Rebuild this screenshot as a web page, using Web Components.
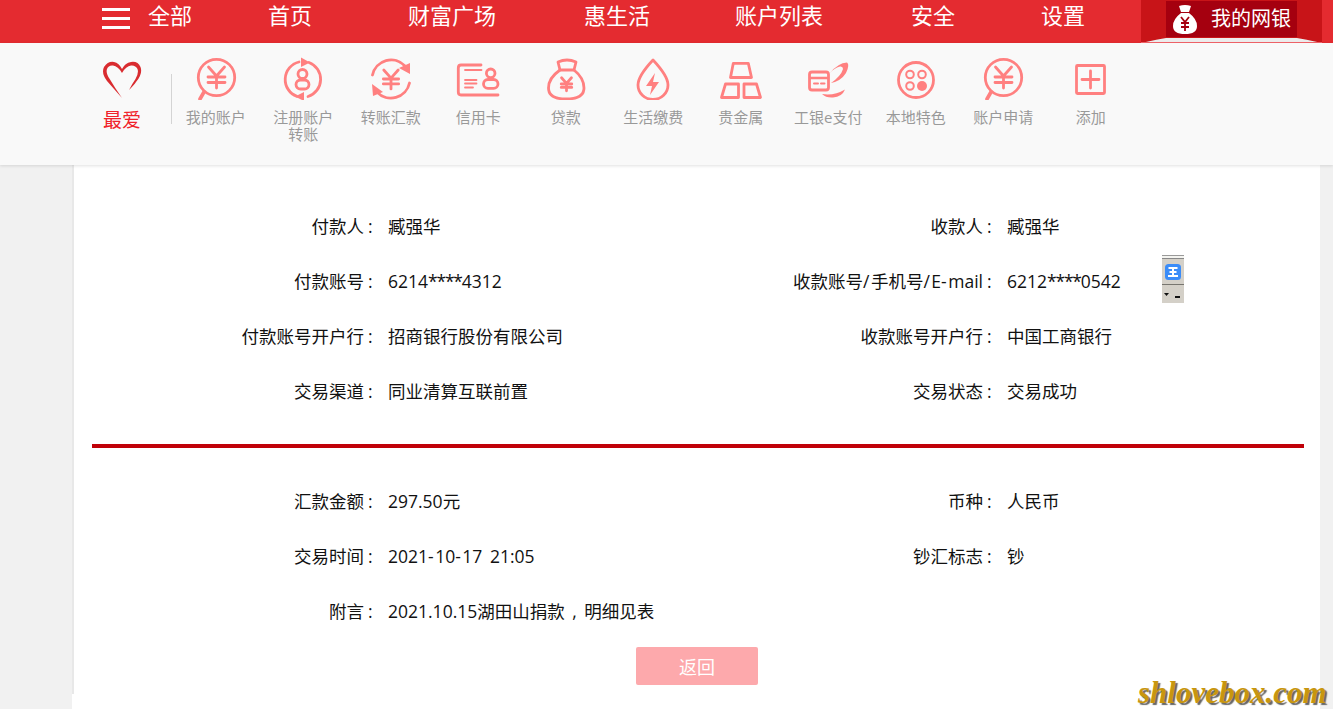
<!DOCTYPE html>
<html lang="zh">
<head>
<meta charset="utf-8">
<title>我的网银</title>
<style>
  html, body { margin: 0; height: 709px; overflow: hidden; background: #f1f1f1; }
  body { font-family: "Open Sans", "Noto Sans CJK SC", "Liberation Sans", sans-serif; }
</style>
</head>
<body>
<bank-page></bank-page>

<script>
// icon strokes, all drawn in a 44x44 box
const YEN = (x, y, s = 1) => `<path vector-effect="non-scaling-stroke" transform="translate(${x} ${y}) scale(${s})" d="M-8 -10L0 -1L8 -10M-8.500 0H8.500M-8.500 5.500H8.500M0 -1V11"/>`;

const ICONS = {
  account: `<circle cx="22.500" cy="21.500" r="18.200"/><path d="M10 36L6 43" stroke-width="3.600"/>${YEN(22.500, 21)}`,
  register: `<path d="M18 6A18 18 0 0 0 16 40.400M28 6.500A18 18 0 0 1 27 40.500"/><path class="f n" d="M20 1.500L29 6.500L20 11ZM23 36L14 40.500L23 45Z"/>
    <circle cx="21.500" cy="18" r="4.500"/><rect x="15" y="24" width="13" height="9" rx="4.500"/>`,
  transfer: `<path d="M3.500 19A19 19 0 0 1 36 10M40.500 27A19 19 0 0 1 8 36"/><path class="f n" d="M30 12L41 7L41 18ZM3 28L14 36L4 40Z"/>${YEN(22, 23, .9)}`,
  credit: `<path d="M25 9H5Q2.300 9 2.300 12V36Q2.300 39 5 39H42"/><path d="M9 14H25.500M9 24H20.500M9 27.500H20.500M9 31.500H17" stroke-width="1.800"/>
    <circle cx="34.700" cy="17.300" r="4.300"/><rect x="27.500" y="23.500" width="14.500" height="8.800" rx="4.400"/>`,
  loan: `<path d="M16 14L14 6Q23 2 32 6L30 14M16 14H30"/><path d="M16 14Q4.500 22 4.500 32Q4.500 43 22 43Q40 43 40 32Q40 22 30 14"/>${YEN(22.500, 28, .62)}`,
  bill: `<path d="M22 4Q7 20 7 29A15 14.500 0 0 0 37 29Q37 20 22 4Z"/><path class="f n" d="M24 17L15 30H21L19 39L28 26H22Z"/>`,
  metal: `<path d="M14.300 7.300H29.300L32.500 21.500H11.500ZM6.500 28H19.500V41.500H2.500ZM25 28H37.500L41.500 41.500H25Z"/>`,
  epay: `<rect x="3.500" y="16" width="19" height="18" rx="2.500"/><path d="M4 22H22" stroke-width="2.400"/><path d="M8 27.500H12M15 27.500H18.500" stroke-width="2"/>
    <path class="f n" d="M24 17Q32 7 41 6.500Q44 9 40 17Q35 25 25 27Q35 20 37 13Q37 10 34 10.500Q28 12 24 17ZM16 38Q28 40 39 33.500Q36 41 27 41.500Q20 42 16 38Z"/>`,
  local: `<circle cx="22" cy="24" r="17.500"/><g stroke-width="2"><circle cx="16" cy="18.500" r="3.800"/><circle cx="28" cy="18.500" r="3.800"/><circle cx="16" cy="30" r="3.800"/></g><circle class="f n" cx="28" cy="30" r="5"/>`,
  add: `<rect x="7.500" y="9.500" width="28" height="28" rx="1"/><path d="M21.500 15V32M13 23.500H30"/>`
};

class BankIcon extends HTMLElement {
  connectedCallback() {
    const name = this.getAttribute('name');
    this.attachShadow({ mode: 'open' }).innerHTML = `
      <style>
        :host { display: block; width: 44px; height: 44px; }
        svg { display: block; fill: none; stroke: #ff8080; stroke-width: 2.800; stroke-linecap: round; stroke-linejoin: round; }
        .f { fill: #ff8080; }
        .n { stroke: none; }
      </style>
      <svg width="44" height="44" viewBox="0 0 44 44">${ICONS[name]}</svg>`;
  }
}

class TopNav extends HTMLElement {
  constructor() {
    super();
    this.attachShadow({ mode: 'open' }).innerHTML = `
      <style>
        :host { display: flex; height: 43px; background: #e42b30; color: #fff; font-size: 22px; line-height: 30px; padding-left: 102px; box-sizing: border-box; }
        .burger { width: 28px; height: 21px; margin-top: 8px; display: flex; flex-direction: column; justify-content: space-between; }
        .burger i { height: 3px; background: #fff; }
        span { white-space: nowrap; }
        .tab { margin-left: 56px; width: 181px; height: 43px; display: flex; flex-direction: column; background: #c81418; }
        .inner { margin: 1px 25px 0; height: 36px; background: #a5000f; display: flex; align-items: center; font-size: 20px; line-height: 28px; padding-left: 7px; }
        .inner svg { margin-right: 14px; }
        .strip { display: block; margin-top: auto; }
      </style>
      <div class="burger"><i></i><i></i><i></i></div>
      <span style="margin-left:18px">全部</span>
      <span style="margin-left:76px">首页</span>
      <span style="margin-left:96px">财富广场</span>
      <span style="margin-left:88px">惠生活</span>
      <span style="margin-left:85px">账户列表</span>
      <span style="margin-left:88px">安全</span>
      <span style="margin-left:86px">设置</span>
      <div class="tab">
        <div class="inner">
          <svg width="24" height="29" viewBox="0 0 24 29">
            <path fill="#fff" d="M6 1Q12 -1 18 1L16 7H8ZM8 8H16Q24 14 24 21Q24 29 12 29Q0 29 0 21Q0 14 8 8Z"/>
            <path fill="none" stroke="#a5000f" stroke-width="1.800" d="M8 12L12 17L16 12M8 18H16M8 22H16M12 17V26"/>
          </svg>
          我的网银
        </div>
        <svg class="strip" width="181" height="5" viewBox="0 0 181 5">
          <path fill="#ececec" d="M0 5Q18 1 25 0H156Q163 1 181 5Z"/>
          <rect y="4" width="181" height="1" fill="#f2636a"/>
        </svg>
      </div>`;
  }
}

class QuickItem extends HTMLElement {
  constructor() {
    super();
    this.attachShadow({ mode: 'open' }).innerHTML = `
      <style>
        :host { display: flex; flex-direction: column; align-items: center; width: 87.500px; color: #999; font-size: 15px; line-height: 17px; text-align: center; }
        .label { margin-top: 9px; }
      </style>
      <slot name="icon"></slot>
      <div class="label"><slot></slot></div>`;
  }
}

class QuickBar extends HTMLElement {
  constructor() {
    super();
    this.attachShadow({ mode: 'open' }).innerHTML = `
      <style>
        :host { display: flex; height: 122px; box-sizing: border-box; padding: 13px 0 0 102px; background: #f9f9f9; box-shadow: 0 1px 3px rgba(0,0,0,.12); position: relative; z-index: 1; }
        .fav { width: 40px; display: flex; flex-direction: column; align-items: center; color: #f0222a; font-size: 19px; line-height: 24px; }
        .fav svg { margin-top: 5px; margin-bottom: 9px; }
        .sep { width: 1px; height: 50px; margin: 18px 0 0 29px; background: #d4d4d4; }
      </style>
      <div class="fav">
        <svg width="40" height="38" viewBox="0 0 40 38">
          <path fill="#d92c30" d="M20 37Q12 28 5 20Q-1 12 2 6Q6 0 12 1Q17 2 20 8Q23 2 29 1Q36 0 38.500 6Q41 13 34 21Q32 24 27 29Q30 23 33.500 18Q37 12 35.500 8Q33.500 4 29 4.500Q24 5 20 12Q16 5 11 4.500Q6.500 4 5 8Q3.500 12 8 18.500Q13 27 20 37Z"/>
        </svg>
        最爱
      </div>
      <div class="sep"></div>
      <slot></slot>`;
  }
}

class DetailRow extends HTMLElement {
  constructor() {
    super();
    this.attachShadow({ mode: 'open' }).innerHTML = `
      <style>
        :host { display: grid; grid-template-columns: 314px 306px 313px 1fr; height: 55px; box-sizing: border-box; padding-bottom: 2px; align-items: center; color: #111; font-size: 17.500px; line-height: 26px; white-space: nowrap; word-spacing: 3px; }
        .k { text-align: right; }
        .k b { font-weight: 400; display: inline-block; width: 24px; text-align: left; padding-left: 4px; box-sizing: border-box; }
        .star { letter-spacing: -1.200px; }
        .wide { letter-spacing: 1.500px; }
      </style>
      <div class="k" id="ka"></div><div id="va"></div>
      <div class="k" id="kb"></div><div id="vb"></div>`;
  }
  connectedCallback() {
    const root = this.shadowRoot;
    // the asterisks, hyphens and slashes don't have the reference's widths in this font
    const tune = (text) => text.replace(/\*+|[-\/]/g, (m) =>
      `<span class="${m[0] === '*' ? 'star' : 'wide'}">${m}</span>`);
    const fill = (key, val) => {
      const label = this.getAttribute(key);
      if (label) {
        root.getElementById(key).innerHTML = `${tune(label)}<b>:</b>`;
        root.getElementById(val).innerHTML = tune(this.getAttribute(val));
      }
    };
    fill('ka', 'va');
    fill('kb', 'vb');
  }
}

class DetailCard extends HTMLElement {
  constructor() {
    super();
    this.attachShadow({ mode: 'open' }).innerHTML = `
      <style>
        :host { display: block; height: 529px; box-sizing: border-box; padding-top: 34px; background: #fff; border-left: 2px solid #e8e8e8; }
        hr { height: 4px; border: 0; margin: 25px 16px 26px 18px; background: #c00008; }
        button { display: block; width: 122px; height: 38px; margin: 8px 0 0 562px; padding: 0; border: 0; border-radius: 2px; background: #fda9ac; color: #fff; font: inherit; font-size: 18px; }
      </style>
      <slot name="top"></slot>
      <hr>
      <slot name="bottom"></slot>
      <button>返回</button>`;
  }
}

class FloatWidget extends HTMLElement {
  constructor() {
    super();
    this.attachShadow({ mode: 'open' }).innerHTML = `
      <style>
        :host { position: absolute; left: 1162px; top: 255px; width: 22px; height: 48px; background: #d4d0c8; z-index: 2; }
        svg { display: block; }
      </style>
      <svg width="22" height="48" viewBox="0 0 22 48">
        <rect width="22" height="1" fill="#9a9a9a"/>
        <rect y="1" width="22" height="2" fill="#f4f4f0"/>
        <rect y="3" width="22" height="1" fill="#888"/>
        <rect x="3" y="9" width="16" height="16" rx="3.500" fill="#3a8cf8"/>
        <path fill="none" stroke="#fff" stroke-width="2" d="M6.500 13H15.500M7.500 17H14.500M6 21H16M11 13V21"/>
        <rect y="29" width="22" height="1" fill="#77756f"/>
        <path fill="#111" d="M2 38H7L4.500 41Z"/>
        <rect x="13" y="41" width="5" height="2" fill="#111"/>
      </svg>`;
  }
}

class WaterMark extends HTMLElement {
  constructor() {
    super();
    this.attachShadow({ mode: 'open' }).innerHTML = `
      <style>
        :host { position: absolute; left: 1138px; top: 675px; z-index: 3; color: #c8960f; font: italic 700 31px/36px "Liberation Serif", serif; text-shadow: 2px 2px 1px #666; white-space: nowrap; }
      </style>
      <slot></slot>`;
  }
}

class BankPage extends HTMLElement {
  constructor() {
    super();
    this.attachShadow({ mode: 'open' }).innerHTML = `
      <style>
        :host { display: block; position: relative; height: 709px; overflow: hidden; }
        main { margin: 0 13px 0 72px; height: 544px; background: #fff; }
      </style>
      <top-nav></top-nav>
      <quick-bar>
        <quick-item><bank-icon slot="icon" name="account"></bank-icon>我的账户</quick-item>
        <quick-item><bank-icon slot="icon" name="register"></bank-icon>注册账户<br>转账</quick-item>
        <quick-item><bank-icon slot="icon" name="transfer"></bank-icon>转账汇款</quick-item>
        <quick-item><bank-icon slot="icon" name="credit"></bank-icon>信用卡</quick-item>
        <quick-item><bank-icon slot="icon" name="loan"></bank-icon>贷款</quick-item>
        <quick-item><bank-icon slot="icon" name="bill"></bank-icon>生活缴费</quick-item>
        <quick-item><bank-icon slot="icon" name="metal"></bank-icon>贵金属</quick-item>
        <quick-item><bank-icon slot="icon" name="epay"></bank-icon>工银e支付</quick-item>
        <quick-item><bank-icon slot="icon" name="local"></bank-icon>本地特色</quick-item>
        <quick-item><bank-icon slot="icon" name="account"></bank-icon>账户申请</quick-item>
        <quick-item><bank-icon slot="icon" name="add"></bank-icon>添加</quick-item>
      </quick-bar>
      <main>
        <detail-card>
          <div slot="top">
            <detail-row ka="付款人" va="臧强华" kb="收款人" vb="臧强华"></detail-row>
            <detail-row ka="付款账号" va="6214****4312" kb="收款账号/手机号/E-mail" vb="6212****0542"></detail-row>
            <detail-row ka="付款账号开户行" va="招商银行股份有限公司" kb="收款账号开户行" vb="中国工商银行"></detail-row>
            <detail-row ka="交易渠道" va="同业清算互联前置" kb="交易状态" vb="交易成功"></detail-row>
          </div>
          <div slot="bottom">
            <detail-row ka="汇款金额" va="297.50元" kb="币种" vb="人民币"></detail-row>
            <detail-row ka="交易时间" va="2021-10-17 21:05" kb="钞汇标志" vb="钞"></detail-row>
            <detail-row ka="附言" va="2021.10.15湖田山捐款 , 明细见表"></detail-row>
          </div>
        </detail-card>
      </main>
      <float-widget></float-widget>
      <water-mark>shlovebox.com</water-mark>`;
  }
}

customElements.define('bank-icon', BankIcon);
customElements.define('top-nav', TopNav);
customElements.define('quick-item', QuickItem);
customElements.define('quick-bar', QuickBar);
customElements.define('detail-row', DetailRow);
customElements.define('detail-card', DetailCard);
customElements.define('float-widget', FloatWidget);
customElements.define('water-mark', WaterMark);
customElements.define('bank-page', BankPage);
</script>
</body>
</html>
